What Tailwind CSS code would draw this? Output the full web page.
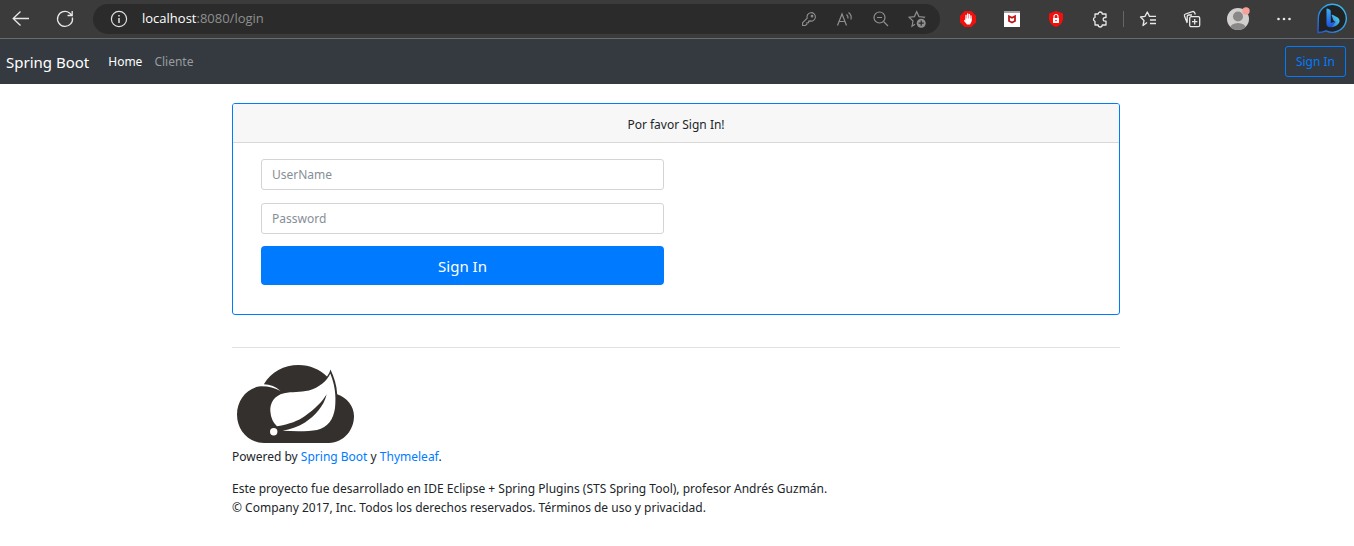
<!DOCTYPE html>
<html lang="es">
<head>
<meta charset="utf-8">
<meta name="viewport" content="width=device-width, initial-scale=1">
<title>Login</title>
<script src="https://cdn.jsdelivr.net/npm/@tailwindcss/browser@4"></script>
</head>
<body class="min-h-screen bg-white font-['Noto_Sans','Open_Sans',sans-serif] text-xs text-[#212529]">
<header class="flex h-[39px] items-center border-b border-[#6b6b6b] bg-[#3b3b3b] pr-1.5 pl-[9px] text-[#e8e8e8]">
  <button type="button" aria-label="Atrás" class="mr-5 flex size-6 items-center justify-center">
    <svg class="size-5" viewBox="0 0 20 20" fill="none" stroke="currentColor" stroke-width="1.3"><path d="M18 9.500H2.500M9.500 2.500L2.200 9.500L9.500 16.500"/></svg>
  </button>
  <button type="button" aria-label="Actualizar" class="flex size-6 items-center justify-center">
    <svg class="size-5" viewBox="0 0 20 20" fill="none" stroke="currentColor" stroke-width="1.3"><path d="M17.400 8.500A7.500 7.500 0 1 1 14.500 3.900L17 6.200M17.200 2V6.500H12.500"/></svg>
  </button>
  <div class="ml-4 flex h-[30px] flex-1 items-center rounded-full bg-[#2b2b2b] pr-3.5 pl-[17px] text-[#8f8f8f]">
    <button type="button" aria-label="Información del sitio" class="mr-3.5 text-[#e0e0e0]">
      <svg class="block size-[18px]" viewBox="0 0 18 18" fill="none" stroke="currentColor" stroke-width="1.200"><circle cx="9" cy="9" r="7.600"/><path d="M9 8V13M9 5V6.500" stroke-width="1.500"/></svg>
    </button>
    <div class="flex-1 font-['Open_Sans','Noto_Sans',sans-serif] text-[13px]"><span class="text-white">localhost</span>:8080/login</div>
    <div class="flex items-center gap-[18px]">
      <button type="button" aria-label="Contraseñas"><svg class="block size-[18px]" viewBox="0 0 18 18" fill="none" stroke="currentColor" stroke-width="1.100"><path d="M7.200 8.200A4.200 4.200 0 1 1 10 10.900L8.600 11.200V12.700H6.900V14.200L5.300 15.500H2.600V12.800L7.200 8.200Z"/><circle cx="12" cy="6.200" r=".8"/></svg></button>
      <button type="button" aria-label="Leer en voz alta"><svg class="block size-[18px]" viewBox="0 0 18 18" fill="none" stroke="currentColor" stroke-width="1.200"><path d="M1.500 15.500L6 4L10.500 15.500M3 11.500H9M10.500 4.500Q12.300 6 12 8.500M12.500 2.500Q16 4.800 15 9.500"/></svg></button>
      <button type="button" aria-label="Reducir zoom"><svg class="block size-[18px]" viewBox="0 0 18 18" fill="none" stroke="currentColor" stroke-width="1.200"><circle cx="7.500" cy="7.500" r="5.500"/><path d="M5 7.500H10M11.500 11.500L16 16"/></svg></button>
      <button type="button" aria-label="Agregar a favoritos"><svg class="block size-[18px]" viewBox="0 0 18 18" fill="none" stroke="currentColor" stroke-width="1.200"><path d="M7 14.300L4 16.200L5 11L1 7.200L6.400 6.600L8.700 1.700L11 6.600L16.300 7.200L15.500 8"/><circle cx="13.200" cy="13.200" r="4.500" fill="currentColor" stroke="none"/><path d="M13.200 10.600V15.800M10.600 13.200H15.800" stroke="#2b2b2b"/></svg></button>
    </div>
  </div>
  <div class="ml-[19px] flex items-center">
    <button type="button" aria-label="AdBlock" class="mr-[26px]"><svg class="block size-[18px]" viewBox="0 0 18 18"><path d="M5.700 1H12.300L17 5.700V12.300L12.300 17H5.700L1 12.300V5.700Z" fill="#f1100c"/><path d="M7 10V5.300M8.700 9V3.800M10.400 9V4.300M12 10V6" stroke="#fff" stroke-width="1.300" stroke-linecap="round"/><path d="M6.400 8.500H12.600V11.500L11 14.500H8L5 11L5.500 9.800L6.600 10.500Z" fill="#fff"/></svg></button>
    <button type="button" aria-label="McAfee" class="mr-[26px]"><svg class="block size-[18px]" viewBox="0 0 18 18"><path d="M1 1H17V17H1Z" fill="#fff"/><path d="M1 1H17V3H1Z" fill="#a8a4a4"/><path d="M6 6.200L9 7.800L12 6.200V11L9 12.600L6 11Z" fill="none" stroke="#c01818" stroke-width="1.800"/></svg></button>
    <button type="button" aria-label="Escudo" class="mr-[26px]"><svg class="block size-[18px]" viewBox="0 0 18 18"><path d="M9 1L16 3.500V9Q16 14 9 17Q2 14 2 9V3.500Z" fill="#f1100c"/><path d="M6 8H12V13H6Z" fill="#fff"/><path d="M7 8V6.500A2 2 0 0 1 11 6.500V8" fill="none" stroke="#fff" stroke-width="1.200"/><circle cx="9" cy="10.500" r=".8" fill="#f1100c"/></svg></button>
    <button type="button" aria-label="Extensiones" class="mr-3.5"><svg class="block size-[18px]" viewBox="0 0 18 18" fill="none" stroke="currentColor" stroke-width="1.300" stroke-linejoin="round"><path d="M4 4H7.200A2 2 0 0 1 11.200 4H15V7.500H14A1.800 1.800 0 0 0 14 11.200H15V15H11.200A2 2 0 0 1 7.200 15H4V11.300A2 2 0 0 1 4 7.400Z"/></svg></button>
    <div class="mr-[15px] h-4 w-px bg-[#666]"></div>
    <button type="button" aria-label="Favoritos" class="mr-[26px]"><svg class="block size-[18px]" viewBox="0 0 18 18" fill="none" stroke="currentColor" stroke-width="1.300" stroke-linejoin="round"><path d="M8 12.500L4 15.500L5 10.500L1.500 7L6 6.400L8.300 2L10.500 6.400H17M11 10H17M11 13.500H17"/></svg></button>
    <button type="button" aria-label="Colecciones" class="mr-[25px]"><svg class="block size-[18px]" viewBox="0 0 18 18" fill="none" stroke="currentColor" stroke-width="1.300"><path d="M4.200 13L1.500 6Q1 4.500 2.500 4L9.500 1.600Q11 1.200 11.700 2.800L12.300 4.500M4.200 12V6.500Q4.200 5 5.700 5H9"/><rect x="6.700" y="6.700" width="10" height="10" rx="1.500"/><path d="M11.700 9V14.400M9 11.700H14.400"/></svg></button>
    <button type="button" aria-label="Perfil" class="mr-[25px]"><svg class="block size-6" viewBox="0 0 24 24"><defs><clipPath id="avatar"><circle cx="12" cy="12" r="11"/></clipPath></defs><g clip-path="url(#avatar)"><path d="M0 0H24V24H0Z" fill="#d2d0ce"/><circle cx="12" cy="9.500" r="5" fill="#8a8886"/><ellipse cx="12" cy="21.500" rx="8" ry="5.500" fill="#8a8886"/></g><circle cx="20" cy="4" r="3.700" fill="#f8a09a"/></svg></button>
    <button type="button" aria-label="Más opciones" class="mr-[23px]"><svg class="block size-[18px]" viewBox="0 0 18 18" fill="currentColor"><circle cx="3.500" cy="9" r="1.300"/><circle cx="9" cy="9" r="1.300"/><circle cx="14.500" cy="9" r="1.300"/></svg></button>
    <button type="button" aria-label="Bing"><svg class="block size-8" viewBox="0 0 32 32">
      <defs><linearGradient id="ring" x1="1" y1="0" x2="0" y2="1"><stop offset="0" stop-color="#38c0f0"/><stop offset=".5" stop-color="#2c9ce8"/><stop offset="1" stop-color="#2458d8"/></linearGradient><linearGradient id="stem" x1="0" y1="0" x2="0" y2="1"><stop offset="0" stop-color="#38b0f8"/><stop offset="1" stop-color="#1c50e0"/></linearGradient><linearGradient id="bowl" x1="1" y1="0" x2="0" y2="1"><stop offset="0" stop-color="#50e0e0"/><stop offset="1" stop-color="#2468f0"/></linearGradient></defs>
      <path d="M2 29.500L2.300 15A14 14 0 1 1 10 27.800Q6 29.500 2 29.500Z" fill="#222" stroke="url(#ring)" stroke-width="1.400"/>
      <path d="M15.500 12Q16.500 11.500 18 12.500L22 14.800Q24.500 17 23 20Q21 23.500 14.500 24.500L19.500 19L17.500 17.500Z" fill="url(#bowl)"/><path d="M10.500 6Q10.500 5 12 5.700L14 6.800Q14.800 7.300 14.800 8.500V20L19.500 18.500L15 23.700Q12.500 25 11 22.800Q10.500 22 10.500 20Z" fill="url(#stem)"/></svg></button>
  </div>
</header>
<nav class="flex h-[45px] items-center bg-[#343a40] pr-2 pl-1.5 text-white">
  <a href="#" class="mr-[19px] text-[15px]">Spring Boot</a>
  <a href="#" class="mr-3">Home</a>
  <a href="#" class="text-[#999c9f]">Cliente</a>
  <a href="#" class="ml-auto flex h-[31px] items-center rounded-[3px] border border-[#007bff] px-2.5 text-[#007bff]">Sign In</a>
</nav>
<main class="mx-auto mt-[19px] max-w-[890px] pr-0.5">
  <section class="rounded-[3px] border border-[#007bff]">
    <h1 class="flex h-[39px] items-center justify-center rounded-t-[2px] border-b border-[#d8d8d8] bg-[#f7f7f7] pt-1">Por favor Sign In!</h1>
    <form class="flex w-1/2 flex-col pt-4 pr-3 pb-[29px] pl-7">
      <input type="text" aria-label="UserName" placeholder="UserName" class="mb-[13px] h-[31px] rounded-[3px] border border-[#d4d4d4] px-2.5 placeholder:text-[#868e96]">
      <input type="password" aria-label="Password" placeholder="Password" class="mb-3 h-[31px] rounded-[3px] border border-[#d4d4d4] px-2.5 placeholder:text-[#868e96]">
      <button type="button" class="h-[39px] rounded-[4px] bg-[#007bff] text-[15px] text-white">Sign In</button>
    </form>
  </section>
  <footer class="mt-8 border-t border-[#e1e1e1] pt-4 leading-[19px]">
    <svg class="mb-[3px] ml-1 h-[80px] w-[120px]" viewBox="0 0 120 80" role="img" aria-label="Spring">
      <path d="M28 20C35 8 48 1 62.500 1C74 1 84 5.500 91 12.500Q93.500 9.500 94.500 5.500C98 13 100.800 21 101.200 30.200C111 33.500 118 42 118 52C118 66 108 78.500 93 79H28C12 78.500 1 66 1 50.500C1 35 12.500 22 28 22Z" fill="#34302d"/>
      <path d="M27 20.300Q37 20 44.500 27Q36 22.300 26 22.200Z" fill="#fff"/>
      <path d="M94.300 9.500C91 17 83 23.500 73 26.500C64 28.500 56 27.500 48 29.200C38 31.500 34 39 34.300 47Q35 57 41 62.300C54 60 62 57 69 52C79 45 86 38 90.700 30.300C88 42 79 52 69 58.500C62 63 54 65 46.500 66.800C60 67.500 73 67.500 81 66C92 63.500 97.500 55 99 44C100.500 31 98.500 20 94.300 9.500Z" fill="#fff"/>
      <circle cx="37.700" cy="67.700" r="3.700" fill="#fff"/>
    </svg>
    <p class="mb-[13px]">Powered by <a href="#" class="text-[#007bff]">Spring Boot</a> y <a href="#" class="text-[#007bff]">Thymeleaf</a>.</p>
    <p>Este proyecto fue desarrollado en IDE Eclipse + Spring Plugins (STS Spring Tool), profesor Andrés Guzmán.<br>© Company 2017, Inc. Todos los derechos reservados. Términos de uso y privacidad.</p>
  </footer>
</main>
</body>
</html>
